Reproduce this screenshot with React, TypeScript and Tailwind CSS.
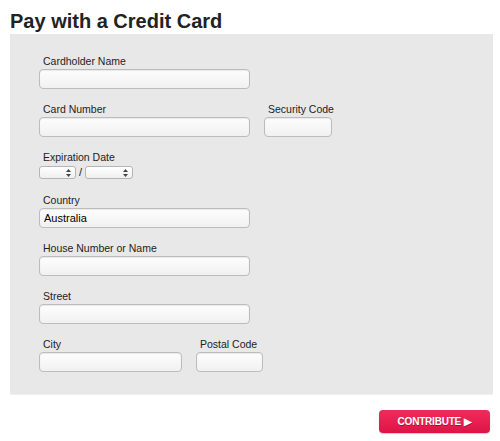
import React from 'react';

const labelClass = "block pl-1 text-[10.5px] leading-[14px] text-[#222] mb-[1px]";
const inputClass =
  "block h-5 rounded-[4px] border border-[#bcbcbc] bg-gradient-to-b from-[#fdfdfd] to-[#f1f1f1] shadow-[inset_0_1px_1px_rgba(0,0,0,0.08)] px-1 text-[11px] text-black outline-none";

const Arrows: React.FC = () => (
  <svg width="5" height="8" viewBox="0 0 5 8" className="absolute right-[5px] top-[3px] pointer-events-none">
    <path d="M2.5 0 L5 3 L0 3 Z" fill="#444" />
    <path d="M2.5 8 L5 5 L0 5 Z" fill="#444" />
  </svg>
);

const MiniSelect: React.FC<{ w: string }> = ({ w }) => (
  <div className={`relative ${w}`}>
    <select className="appearance-none block w-full h-[13px] rounded-[3px] border border-[#b5b5b5] bg-gradient-to-b from-white to-[#efefef] text-[9px] outline-none">
      <option></option>
    </select>
    <Arrows />
  </div>
);

const Field: React.FC<{ label: string; w: string; value?: string }> = ({ label, w, value }) => (
  <div>
    <label className={labelClass}>{label}</label>
    <input type="text" defaultValue={value} className={`${inputClass} ${w}`} />
  </div>
);

const App: React.FC = () => {
  return (
    <div className="w-[500px] h-[441px] bg-white font-['Liberation_Sans',Arial,sans-serif]">
      <h2 className="pl-[10px] pt-[10px] text-[20px] leading-[22px] font-bold text-[#222]">Pay with a Credit Card</h2>
      <div className="mt-[2px] ml-[10px] w-[483px] bg-[#e8e8e8] border-b border-[#f1f1f1] pt-[20px] pb-[22px] pl-[29px] flex flex-col gap-[13px]">
        <Field label="Cardholder Name" w="w-[211px]" />
        <div className="flex gap-[14px]">
          <Field label="Card Number" w="w-[211px]" />
          <Field label="Security Code" w="w-[68px]" />
        </div>
        <div>
          <label className={labelClass}>Expiration Date</label>
          <div className="flex items-center gap-[3px] mt-[2px]">
            <MiniSelect w="w-[37px]" />
            <span className="text-[11px] leading-[13px] text-[#222]">/</span>
            <MiniSelect w="w-[48px]" />
          </div>
        </div>
        <div className="mt-[1px]">
          <Field label="Country" w="w-[211px]" value="Australia" />
        </div>
        <Field label="House Number or Name" w="w-[211px]" />
        <Field label="Street" w="w-[211px]" />
        <div className="flex gap-[14px]">
          <Field label="City" w="w-[143px]" />
          <Field label="Postal Code" w="w-[67px]" />
        </div>
      </div>
      <div className="flex justify-end pr-[10px] pt-[15px]">
        <button className="h-[23px] w-[111px] rounded-[4px] bg-gradient-to-b from-[#f22a5c] to-[#dc1446] text-white text-[10px] font-bold tracking-[-0.2px] [text-shadow:0_1px_0_rgba(0,0,0,0.35)] shadow-[0_1px_1px_rgba(0,0,0,0.2)]">
          CONTRIBUTE ▶
        </button>
      </div>
    </div>
  );
};

export default App;
